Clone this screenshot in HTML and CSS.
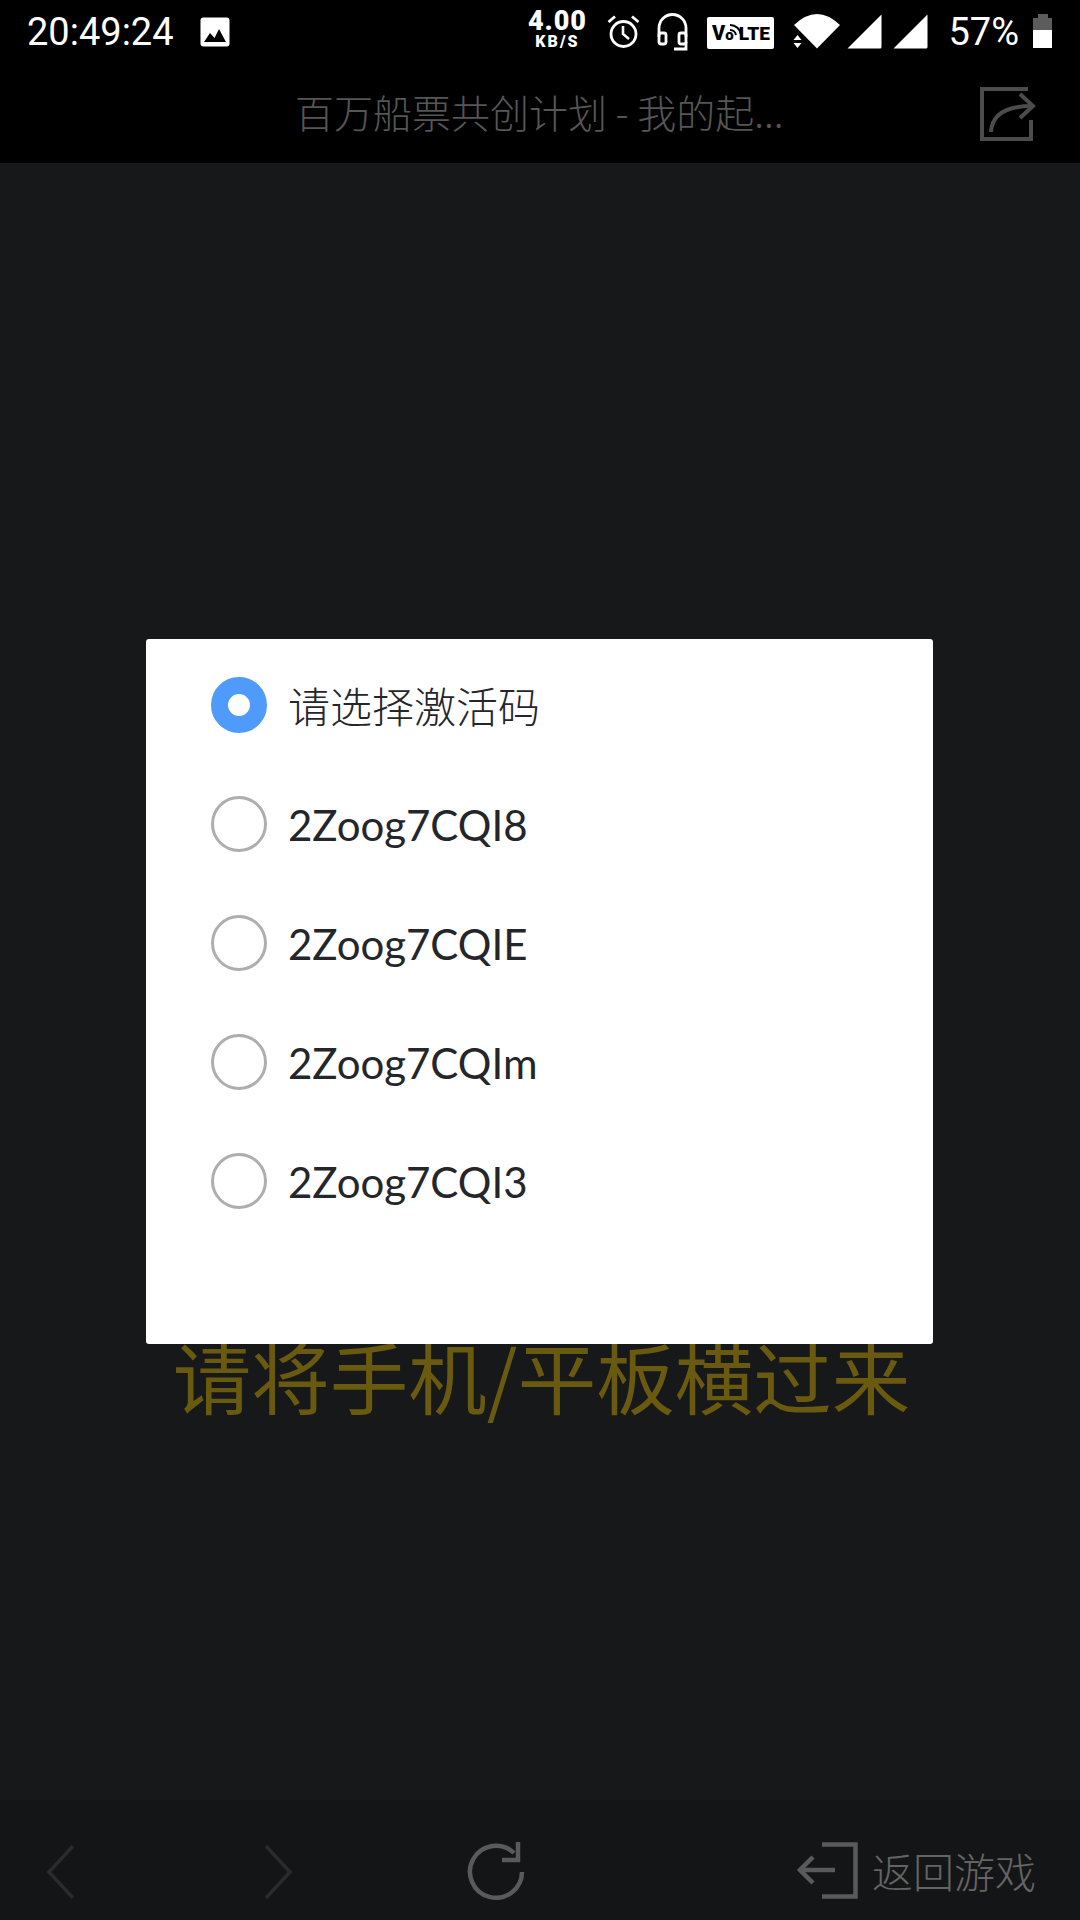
FILE: index.html
```html
<!DOCTYPE html>
<html lang="zh-CN">
<head>
    <meta charset="UTF-8">
    <meta name="viewport" content="width=device-width, initial-scale=1.0">
    <title>百万船票共创计划</title>
    <link rel="stylesheet" href="styles.css">
</head>
<body>
    <div class="status-bar">
        <div class="status-left">
            <span class="clock">20:49:24</span>
            <svg class="icon-picture" width="30" height="30" viewBox="0 0 30 30">
                <rect x="0.5" y="0.5" width="29" height="29" rx="3" fill="#fff"/>
                <path d="M4 25 L10 16 L14.5 21 L19 12 L26 25 Z" fill="#000"/>
            </svg>
        </div>
        <div class="status-right">
            <div class="speed"><span class="speed-num">4.00</span><span class="speed-unit">KB/S</span></div>
            <svg class="icon-alarm" width="33" height="35" viewBox="0 0 33 35" fill="none" stroke="#fff">
                <circle cx="16.5" cy="20" r="12.5" stroke-width="2.8"/>
                <path d="M16 12 V20 L22 25" stroke-width="2.6"/>
                <path d="M1.5 8 L8 2.5 M31.5 8 L25 2.5" stroke-width="2.8"/>
            </svg>
            <svg class="icon-headset" width="31" height="38" viewBox="0 0 31 38" fill="none" stroke="#fff" stroke-width="2.8">
                <path d="M2 24 V15 A13.5 13.5 0 0 1 29 15 V24"/>
                <rect x="2" y="20" width="7" height="11" rx="2"/>
                <rect x="22" y="20" width="7" height="11" rx="2"/>
                <path d="M29 29 V36 H17"/>
            </svg>
            <div class="volte">
                <span>V</span><span class="volte-o">o</span><span class="volte-lte">LTE</span>
                <svg class="volte-arcs" width="14" height="14" viewBox="0 0 14 14" fill="none" stroke="#000" stroke-width="2">
                    <path d="M2 7 A6 6 0 0 1 8 12"/>
                    <path d="M2 2 A11 11 0 0 1 13 12"/>
                </svg>
            </div>
            <svg class="icon-wifi" width="48" height="35" viewBox="0 0 48 35">
                <path d="M1 11 Q24 -11 47 11 L24 34.5 Z" fill="#fff"/>
                <path d="M4.5 21 L0.5 26 H8.5 Z M0.5 29 H8.5 L4.5 34 Z" fill="#fff"/>
            </svg>
            <svg class="icon-signal" width="35" height="35" viewBox="0 0 35 35">
                <path d="M34.5 0.5 V33 Q34.5 34.5 33 34.5 H0.5 Z" fill="#fff"/>
            </svg>
            <svg class="icon-signal icon-signal-two" width="35" height="35" viewBox="0 0 35 35">
                <path d="M34.5 0.5 V33 Q34.5 34.5 33 34.5 H0.5 Z" fill="#fff"/>
            </svg>
            <span class="battery-text">57%</span>
            <div class="battery"><div class="battery-cap"></div><div class="battery-empty"></div><div class="battery-fill"></div></div>
        </div>
    </div>

    <div class="top-bar">
        <div class="page-title">百万船票共创计划 - 我的起...</div>
        <svg class="icon-share" width="56" height="54" viewBox="0 0 56 54" fill="none" stroke="#4c4c4c" stroke-width="4">
            <path d="M48 2 H2 V52 H51 V33"/>
            <path d="M11 45 C12 28 26 19 52 19"/>
            <path d="M40 7 L53 19 L40 31"/>
        </svg>
    </div>

    <div class="content">
        <div class="rotate-hint">请将手机/平板横过来</div>
    </div>

    <div class="bottom-bar">
        <svg class="icon-prev" width="29" height="54" viewBox="0 0 29 54" fill="none" stroke="#2b2b2b" stroke-width="3.5">
            <path d="M27 1 L3 27 L27 53"/>
        </svg>
        <svg class="icon-next" width="29" height="54" viewBox="0 0 29 54" fill="none" stroke="#2b2b2b" stroke-width="3.5">
            <path d="M2 1 L26 27 L2 53"/>
        </svg>
        <svg class="icon-reload" width="58" height="58" viewBox="0 0 58 58" fill="none" stroke="#5a5a5a" stroke-width="4.5">
            <path d="M55 30 A26 26 0 1 1 47 11"/>
            <path d="M51 0 V18 H35"/>
        </svg>
        <div class="back-game">
            <svg class="icon-back" width="61" height="57" viewBox="0 0 61 57" fill="none" stroke="#5a5a5a" stroke-width="4.5">
                <path d="M25 2.5 H58.5 V54.5 H25"/>
                <path d="M2 28 H38"/>
                <path d="M16 15 L3 28 L16 41"/>
            </svg>
            <span class="back-text">返回游戏</span>
        </div>
    </div>

    <div class="modal">
        <div class="option">
            <span class="radio radio-on"></span>
            <span class="option-text option-text-cjk">请选择激活码</span>
        </div>
        <div class="option">
            <span class="radio"></span>
            <span class="option-text">2Zoog7CQI8</span>
        </div>
        <div class="option">
            <span class="radio"></span>
            <span class="option-text">2Zoog7CQIE</span>
        </div>
        <div class="option">
            <span class="radio"></span>
            <span class="option-text">2Zoog7CQIm</span>
        </div>
        <div class="option">
            <span class="radio"></span>
            <span class="option-text">2Zoog7CQI3</span>
        </div>
    </div>
</body>
</html>
```

FILE: styles.css
```css
* {
    box-sizing: border-box;
}
body {
    margin: 0;
    width: 1080px;
    height: 1920px;
    position: relative;
    display: flex;
    flex-direction: column;
    overflow: hidden;
    background-color: #16181a;
    font-family: "Lato", "Noto Sans CJK SC", sans-serif;
}
.status-bar {
    height: 59px;
    background: #000;
    color: #fff;
    display: flex;
    justify-content: space-between;
    padding: 0 28px 0 27px;
}
.status-left {
    display: flex;
    align-items: flex-start;
}
.clock {
    font-family: "Roboto", sans-serif;
    font-weight: 400;
    font-size: 38px;
    line-height: 40px;
    margin-top: 12px;
}
.icon-picture {
    margin-left: 26px;
    margin-top: 17px;
}
.status-right {
    display: flex;
    align-items: flex-start;
}
.speed {
    display: flex;
    flex-direction: column;
    align-items: center;
    width: 58px;
    margin-top: 8px;
}
.speed-num {
    font-family: "Roboto", sans-serif;
    font-weight: 900;
    font-size: 27px;
    line-height: 26px;
    letter-spacing: 1px;
}
.speed-unit {
    font-family: "Roboto", sans-serif;
    font-weight: 900;
    font-size: 16px;
    line-height: 16px;
    letter-spacing: 2px;
}
.icon-alarm {
    margin-left: 21px;
    margin-top: 14px;
}
.icon-headset {
    margin-left: 17px;
    margin-top: 13px;
}
.volte {
    position: relative;
    margin-left: 19px;
    margin-top: 17px;
    width: 67px;
    height: 32px;
    background: #fff;
    border-radius: 2px;
    color: #000;
    font-family: "Roboto", sans-serif;
    font-weight: 900;
    font-size: 20px;
    line-height: 32px;
    text-align: center;
    white-space: nowrap;
}
.volte-o {
    font-size: 15px;
}
.volte-lte {
    margin-left: 5px;
    font-size: 19px;
}
.volte-arcs {
    position: absolute;
    left: 21px;
    top: 6px;
}
.icon-wifi {
    margin-left: 19px;
    margin-top: 14px;
}
.icon-signal {
    margin-left: 6px;
    margin-top: 14px;
}
.icon-signal-two {
    margin-left: 11px;
}
.battery-text {
    font-family: "Roboto", sans-serif;
    font-weight: 400;
    font-size: 38px;
    line-height: 40px;
    margin-left: 20px;
    margin-top: 12px;
}
.battery {
    margin-left: 14px;
    margin-top: 14px;
    width: 19px;
    display: flex;
    flex-direction: column;
    align-items: center;
}
.battery-cap {
    width: 10px;
    height: 4px;
    background: #5c5c5c;
}
.battery-empty {
    width: 19px;
    height: 12px;
    background: #5c5c5c;
}
.battery-fill {
    width: 19px;
    height: 18px;
    background: #fff;
}
.top-bar {
    height: 104px;
    background: #000;
    position: relative;
    display: flex;
    align-items: center;
    padding-left: 295px;
}
.page-title {
    font-family: "Noto Sans CJK SC", sans-serif;
    font-weight: 300;
    font-size: 39px;
    color: #565656;
    white-space: nowrap;
}
.icon-share {
    position: absolute;
    left: 980px;
    top: 28px;
}
.content {
    flex: 1;
    display: flex;
    flex-direction: column;
    align-items: center;
    padding-top: 1162px;
    padding-left: 3px;
}
.rotate-hint {
    font-family: "Noto Sans CJK SC", sans-serif;
    font-size: 78.5px;
    line-height: 100px;
    color: #6a5a10;
    white-space: nowrap;
}
.bottom-bar {
    height: 120px;
    background: #141516;
    position: relative;
    display: flex;
    align-items: flex-start;
    padding-top: 45px;
    padding-left: 46px;
}
.icon-next {
    margin-left: 189px;
}
.icon-reload {
    margin-left: 174px;
    margin-top: -3px;
}
.back-game {
    display: flex;
    align-items: flex-start;
    margin-left: auto;
    margin-right: 44px;
    margin-top: -3px;
}
.back-text {
    font-family: "Noto Sans CJK SC", sans-serif;
    font-weight: 300;
    font-size: 41px;
    line-height: 56px;
    color: #646464;
    margin-left: 14px;
    margin-top: 0;
}
.modal {
    position: absolute;
    left: 146px;
    top: 639px;
    width: 787px;
    height: 705px;
    background: #fff;
    border-radius: 3px;
    padding: 6px 0 0 65px;
}
.option {
    height: 119px;
    display: flex;
    align-items: center;
}
.radio {
    width: 56px;
    height: 56px;
    border-radius: 50%;
    border: 3px solid #aeaeae;
    flex-shrink: 0;
}
.radio-on {
    border: 17.5px solid #4e9bfb;
    background: #fff;
}
.option-text {
    margin-left: 21px;
    padding-top: 2px;
    font-size: 42px;
    font-weight: 400;
    color: #24262a;
    white-space: nowrap;
}
.option-text-cjk {
    font-size: 42px;
    font-weight: 300;
    padding-top: 0;
}
```
